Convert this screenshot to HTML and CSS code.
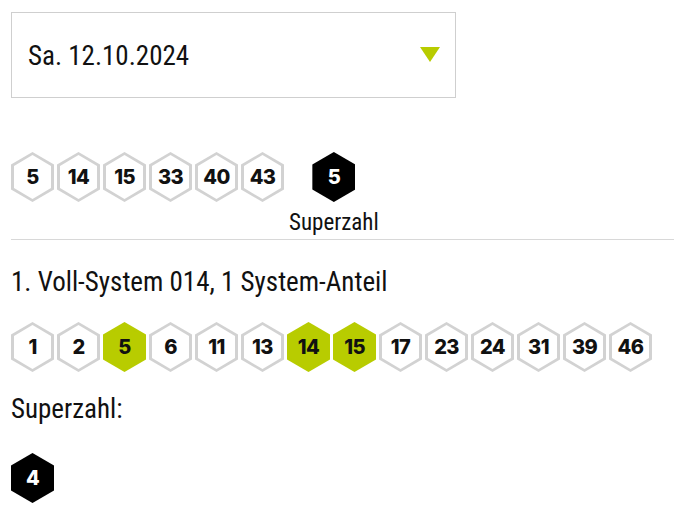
FILE: index.html
```html
<!DOCTYPE html>
<html lang="de">
  <head>
    <meta charset="UTF-8" />
    <meta name="viewport" content="width=device-width, initial-scale=1.0" />
    <title>Lotto Ziehung</title>
    <link rel="stylesheet" href="styles.css">
  </head>
  <body>
    <div class="page">
      <div class="select">
        <span class="select-value">Sa. 12.10.2024</span>
        <span class="select-arrow"></span>
      </div>

      <div class="draw">
        <div class="balls">
          <span class="ball"><b>5</b></span>
          <span class="ball"><b>14</b></span>
          <span class="ball"><b>15</b></span>
          <span class="ball"><b>33</b></span>
          <span class="ball"><b>40</b></span>
          <span class="ball"><b>43</b></span>
        </div>
        <div class="super">
          <span class="ball black"><b>5</b></span>
          <span class="super-label">Superzahl</span>
        </div>
      </div>

      <hr class="divider" />

      <p class="system-title">1. Voll-System 014, 1 System-Anteil</p>

      <div class="balls">
        <span class="ball"><b>1</b></span>
        <span class="ball"><b>2</b></span>
        <span class="ball hit"><b>5</b></span>
        <span class="ball"><b>6</b></span>
        <span class="ball"><b>11</b></span>
        <span class="ball"><b>13</b></span>
        <span class="ball hit"><b>14</b></span>
        <span class="ball hit"><b>15</b></span>
        <span class="ball"><b>17</b></span>
        <span class="ball"><b>23</b></span>
        <span class="ball"><b>24</b></span>
        <span class="ball"><b>31</b></span>
        <span class="ball"><b>39</b></span>
        <span class="ball"><b>46</b></span>
      </div>

      <p class="super-title">Superzahl:</p>

      <div class="balls">
        <span class="ball black"><b>4</b></span>
      </div>
    </div>
  </body>
</html>
```

FILE: styles.css
```css
* {
  margin: 0;
  padding: 0;
  box-sizing: border-box;
}
body {
  background: #fff;
  color: #111;
  font-family: "Roboto Condensed", "Liberation Sans Narrow", Roboto, sans-serif;
  font-stretch: condensed;
}
.page {
  padding: 12px 0 0 11px;
}
.select {
  width: 445px;
  height: 86px;
  border: 1px solid #cfcfcf;
  display: flex;
  align-items: center;
  justify-content: space-between;
  padding: 0 15px 0 16px;
}
.select-value {
  font-size: 27px;
  line-height: 32px;
  margin-top: 2px;
}
.select-arrow {
  width: 0;
  height: 0;
  border-left: 10px solid transparent;
  border-right: 10px solid transparent;
  border-top: 15px solid #b8cc00;
  margin-top: -2px;
}
.draw {
  display: flex;
  align-items: flex-start;
  margin-top: 54px;
}
.balls {
  display: flex;
  gap: 3px;
}
.ball {
  position: relative;
  width: 43px;
  height: 50px;
  display: flex;
  align-items: center;
  justify-content: center;
  background: #d2d2d2;
  clip-path: polygon(50% 0, 100% 25%, 100% 75%, 50% 100%, 0 75%, 0 25%);
}
.ball::before {
  content: "";
  position: absolute;
  inset: 3px;
  background: #fff;
  clip-path: polygon(50% 0, 100% 25%, 100% 75%, 50% 100%, 0 75%, 0 25%);
}
.ball b {
  position: relative;
  font-family: Inter, sans-serif;
  font-stretch: normal;
  font-weight: 800;
  font-size: 20px;
  letter-spacing: -0.6px;
  color: #111;
}
.ball.hit,
.ball.hit::before {
  background: #b8cc00;
}
.ball.black,
.ball.black::before {
  background: #000;
}
.ball.black b {
  color: #fff;
}
.super {
  display: flex;
  flex-direction: column;
  align-items: center;
  margin-left: 5px;
}
.super-label {
  font-size: 23px;
  line-height: 27px;
  margin-top: 7px;
}
.divider {
  border: none;
  border-top: 1px solid #d8d8d8;
  margin-top: 3px;
}
.system-title {
  font-size: 27px;
  line-height: 32px;
  margin: 26px 0 24px;
}
.super-title {
  font-size: 27px;
  line-height: 32px;
  margin: 21px 0 28px;
}
```
